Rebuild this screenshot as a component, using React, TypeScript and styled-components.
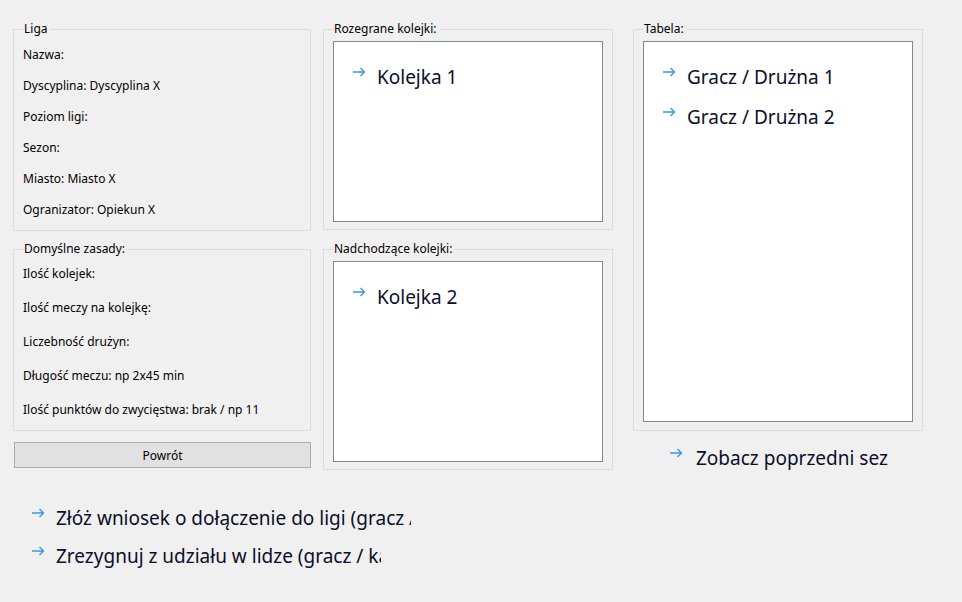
import React from 'react';
import styled, { createGlobalStyle } from 'styled-components';

const GlobalStyle = createGlobalStyle`
   html, body {
      margin: 0;
      padding: 0;
      background: #f0f0f0;
   }
   body {
      font-family: 'Noto Sans', 'Open Sans', Arial, sans-serif;
      font-size: 12px;
      color: #000;
   }
`;

const ligaInfo = [
   'Nazwa:',
   'Dyscyplina: Dyscyplina X',
   'Poziom ligi:',
   'Sezon:',
   'Miasto: Miasto X',
   'Ogranizator: Opiekun X',
];

const defaultRules = [
   'Ilość kolejek:',
   'Ilość meczy na kolejkę:',
   'Liczebność drużyn:',
   'Długość meczu: np 2x45 min',
   'Ilość punktów do zwycięstwa: brak / np 11',
];

const Window = styled.div`
   width: 962px;
   height: 602px;
   box-sizing: border-box;
   padding: 21px 0 0 13px;
   overflow: hidden;
`;

const Columns = styled.div`
   display: flex;
   align-items: flex-start;
`;

const Column = styled.div<{ $w: number; $ml?: number; $gap?: number }>`
   display: flex;
   flex-direction: column;
   width: ${(p) => p.$w}px;
   margin-left: ${(p) => p.$ml || 0}px;
   gap: ${(p) => p.$gap ?? 10}px;
`;

const Group = styled.fieldset<{ $pad?: string }>`
   margin: 0;
   padding: ${(p) => p.$pad || '0 9px'};
   border: 1px solid #dcdcdc;
   min-width: 0;
`;

const Legend = styled.legend`
   padding: 0 2px 0 1px;
   margin-left: 0;
   line-height: 16px;
   font-size: 12px;
`;

const InfoRow = styled.div<{ $h: number }>`
   height: ${(p) => p.$h}px;
   line-height: ${(p) => p.$h}px;
   white-space: nowrap;
`;

const Button = styled.button`
   margin: 1px 0 0 1px;
   width: 297px;
   height: 26px;
   background: #e1e1e1;
   border: 1px solid #adadad;
   font-family: inherit;
   font-size: 12px;
   color: #000;
   padding: 0;
`;

const ListBox = styled.div<{ $h: number }>`
   height: ${(p) => p.$h}px;
   box-sizing: border-box;
   background: #fff;
   border: 1px solid #828790;
   padding: 23px 0 0 18px;
   display: flex;
   flex-direction: column;
   gap: 16px;
`;

const LinkItem = styled.div<{ $w?: number }>`
   display: flex;
   align-items: flex-start;
   gap: 11px;
   height: 24px;
   width: ${(p) => (p.$w ? `${p.$w}px` : 'auto')};
   overflow: hidden;
   white-space: nowrap;
`;

const LinkText = styled.span`
   font-size: 19px;
   line-height: 24px;
   color: #0a0f2a;
`;

const ArrowIcon = styled.svg`
   flex: none;
   margin-top: 2px;
`;

const Arrow = () => (
   <ArrowIcon width="14" height="10" viewBox="0 0 14 10">
      <path d="M1 5H12.5M8.5 1L12.5 5L8.5 9" fill="none" stroke="#3a96e4" strokeWidth="1.3" />
   </ArrowIcon>
);

const Link = ({ text, width }: { text: string; width?: number }) => (
   <LinkItem $w={width}>
      <Arrow />
      <LinkText>{text}</LinkText>
   </LinkItem>
);

const Under = styled.div`
   padding: 5px 0 0 36px;

   & ${LinkItem} {
      gap: 13px;
   }
`;

const Bottom = styled.div`
   display: flex;
   flex-direction: column;
   gap: 14px;
   padding: 36px 0 0 18px;
`;

const App: React.FC = () => (
   <Window>
      <GlobalStyle />
      <Columns>
         <Column $w={298}>
            <Group $pad="2px 9px 5px">
               <Legend>Liga</Legend>
               {ligaInfo.map((row, i) => (
                  <InfoRow key={`l${i}`} $h={31}>
                     {row}
                  </InfoRow>
               ))}
            </Group>
            <Group $pad="0 9px 3px">
               <Legend>Domyślne zasady:</Legend>
               {defaultRules.map((row, i) => (
                  <InfoRow key={`r${i}`} $h={34}>
                     {row}
                  </InfoRow>
               ))}
            </Group>
            <Button>Powrót</Button>
         </Column>
         <Column $w={290} $ml={12} $gap={11}>
            <Group $pad="4px 9px 7px">
               <Legend>Rozegrane kolejki:</Legend>
               <ListBox $h={181}>
                  <Link text="Kolejka 1" />
               </ListBox>
            </Group>
            <Group $pad="4px 9px 7px">
               <Legend>Nadchodzące kolejki:</Legend>
               <ListBox $h={201}>
                  <Link text="Kolejka 2" />
               </ListBox>
            </Group>
         </Column>
         <Column $w={290} $ml={20}>
            <Group $pad="4px 9px 8px">
               <Legend>Tabela:</Legend>
               <ListBox $h={381}>
                  <Link text="Gracz / Drużna 1" />
                  <Link text="Gracz / Drużna 2" />
               </ListBox>
            </Group>
            <Under>
               <Link text="Zobacz poprzedni sezon" width={219} />
            </Under>
         </Column>
      </Columns>
      <Bottom>
         <Link text="Złóż wniosek o dołączenie do ligi (gracz / kapitan)" width={380} />
         <Link text="Zrezygnuj z udziału w lidze (gracz / kapitan)" width={350} />
      </Bottom>
   </Window>
);

export default App;
